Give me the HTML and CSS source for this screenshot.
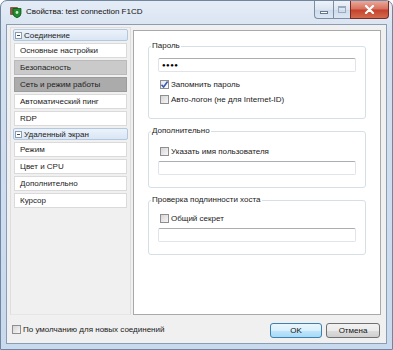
FILE: index.html
```html
<!DOCTYPE html>
<html lang="ru">
<head>
<meta charset="utf-8">
<title>Свойства</title>
<link rel="stylesheet" href="styles.css">
</head>
<body>
<div class="window">
  <div class="titlebar">
    <svg class="appicon" width="12" height="12" viewBox="0 0 12 12">
      <rect x="0" y="1" width="8" height="8" rx="1" fill="#8a5a4a"/>
      <path d="M3 2.5 L11 2.5 L11 7.5 Q11 10.5 7 11.8 Q3 10.5 3 7.5 Z" fill="#1f8a2e" stroke="#0d5a18" stroke-width="0.8"/>
      <circle cx="7" cy="6.5" r="1.4" fill="#cfe9cf"/>
    </svg>
    <span class="title">Свойства: test connection F1CD</span>
    <div class="caption">
      <span class="cbtn min"><i></i></span>
      <span class="cbtn max"><i></i></span>
      <span class="cbtn close">
        <svg width="11" height="9" viewBox="0 0 11 9"><path d="M2 1 L9 8 M9 1 L2 8" stroke="#fff" stroke-width="2.2" stroke-linecap="round"/></svg>
      </span>
    </div>
  </div>
  <div class="client">
    <div class="main">
      <nav class="sidebar">
        <div class="head"><span class="toggle"></span>Соединение</div>
        <div class="item">Основные настройки</div>
        <div class="item sel">Безопасность</div>
        <div class="item sel2">Сеть и режим работы</div>
        <div class="item">Автоматический пинг</div>
        <div class="item">RDP</div>
        <div class="head"><span class="toggle"></span>Удаленный экран</div>
        <div class="item">Режим</div>
        <div class="item">Цвет и CPU</div>
        <div class="item">Дополнительно</div>
        <div class="item">Курсор</div>
      </nav>
      <section class="panel">
        <fieldset class="group g1">
          <legend>Пароль</legend>
          <div class="input pass">&#9679;&#9679;&#9679;&#9679;</div>
          <div class="check first"><span class="box checked"><svg width="9" height="9" viewBox="0 0 9 9"><path d="M1.5 4.8 L3.6 7 L7.6 1.5" fill="none" stroke="#3b5bab" stroke-width="1.6"/></svg></span>Запомнить пароль</div>
          <div class="check"><span class="box"></span>Авто-логон (не для Internet-ID)</div>
        </fieldset>
        <fieldset class="group">
          <legend>Дополнительно</legend>
          <div class="check"><span class="box"></span>Указать имя пользователя</div>
          <div class="input"></div>
        </fieldset>
        <fieldset class="group g3">
          <legend>Проверка подлинности хоста</legend>
          <div class="check"><span class="box"></span>Общий секрет</div>
          <div class="input"></div>
        </fieldset>
      </section>
    </div>
    <div class="footer">
      <div class="check"><span class="box"></span>По умолчанию для новых соединений</div>
      <div class="buttons">
        <span class="btn default">OK</span>
        <span class="btn">Отмена</span>
      </div>
    </div>
  </div>
</div>
</body>
</html>
```
FILE: styles.css
```css
* { box-sizing: border-box; }
html, body { margin: 0; padding: 0; }
body {
  width: 393px;
  height: 350px;
  background: #fff;
  font-family: "Liberation Sans", Arial, sans-serif;
  font-size: 8px;
  color: #1a1a1a;
  overflow: hidden;
}
.window {
  width: 393px;
  height: 350px;
  border: 1px solid #71869e;
  border-radius: 7px 7px 0 0;
  background: linear-gradient(180deg, #e4ecf6 0%, #d3e0f0 12%, #c9daee 100%);
  padding: 0 5px 5px 5px;
  display: flex;
  flex-direction: column;
}
.titlebar {
  height: 23px;
  display: flex;
  align-items: center;
  padding-left: 4px;
}
.appicon { flex: none; margin-top: -2px; }
.title {
  margin-left: 4px;
  font-size: 8px;
  color: #111;
  margin-top: -2px;
}
.caption {
  margin-left: auto;
  align-self: flex-start;
  display: flex;
  margin-right: -2px;
  height: 18px;
}
.cbtn {
  height: 18px;
  border: 1px solid #7d8ea3;
  border-top: none;
  display: flex;
  align-items: center;
  justify-content: center;
  background: linear-gradient(180deg, #eef3f9 0%, #dbe5f1 50%, #cbdaeb 51%, #dce7f4 100%);
}
.cbtn.min { width: 19px; border-radius: 0 0 0 4px; border-right: none; }
.cbtn.max { width: 17px; border-right: none; }
.cbtn.close {
  width: 39px;
  border-radius: 0 0 4px 0;
  border-color: #7a2a22;
  background: linear-gradient(180deg, #e9a99b 0%, #d7705c 48%, #c4412b 52%, #d36a50 100%);
}
.cbtn.min i {
  width: 8px; height: 3px;
  margin-top: 5px;
  border: 1px solid #66778c;
  background: #fff;
  display: block;
}
.cbtn.max i {
  width: 8px; height: 7px;
  border: 1px solid #9aa9bb;
  border-top-width: 2px;
  display: block;
}
.client {
  flex: 1;
  border: 1px solid #8a9db4;
  background: #f0f0f0;
  padding: 2px 5px 0 3px;
  display: flex;
  flex-direction: column;
}
.main {
  height: 288px;
  display: flex;
  gap: 2px;
}
.sidebar {
  width: 121px;
  border: 1px solid #dedede;
  border-bottom-color: #e6e6e6;
  padding: 1px 2px;
  display: flex;
  flex-direction: column;
  gap: 2px;
}
.head {
  height: 12px;
  display: flex;
  align-items: center;
  border: 1px solid #b3c7df;
  border-radius: 2px;
  background: linear-gradient(180deg, #ecf2fa, #d9e6f5);
  padding-left: 1px;
  color: #1a1a1a;
}
.toggle {
  width: 7px;
  height: 7px;
  border: 1px solid #8c9cb1;
  background: #fff;
  margin-right: 2px;
  position: relative;
  flex: none;
}
.toggle::after {
  content: "";
  position: absolute;
  left: 1px; right: 1px; top: 2px;
  height: 1px;
  background: #3d4a5c;
}
.item {
  height: 15px;
  margin: 0 1px;
  border: 1px solid #dadada;
  background: #fff;
  padding-left: 5px;
  display: flex;
  align-items: center;
  color: #222;
}
.item.sel { background: #cacaca; border-color: #bababa; }
.item.sel2 { background: #ababab; border-color: #9c9c9c; }
.panel {
  flex: 1;
  margin-top: 3px;
  background: #fff;
  border: 1px solid #a9a9a9;
  padding: 9px 14px 0 14px;
  display: flex;
  flex-direction: column;
  gap: 6px;
}
.group {
  margin: 0;
  border: 1px solid #d5dfe5;
  border-radius: 3px;
  padding: 8px 9px 12px 9px;
  min-width: 0;
}
.group.g1 { padding-top: 6px; }
.group.g3 { padding-top: 6px; }
.group legend {
  margin-left: -7px;
  padding: 0 1px;
  line-height: 12px;
  color: #1a1a1a;
}
.input {
  height: 14px;
  border: 1px solid #e2e3ea;
  border-top-color: #abadb3;
  border-radius: 2px;
  background: #fff;
  margin-top: 3px;
}
.input.pass {
  margin-top: 0;
  font-size: 6px;
  letter-spacing: 0.5px;
  display: flex;
  align-items: center;
  padding-left: 3px;
  color: #000;
}
.check {
  height: 13px;
  display: flex;
  align-items: center;
  padding-left: 2px;
  color: #1a1a1a;
}
.check.first { margin-top: 6px; margin-bottom: 2px; }
.box {
  width: 9px;
  height: 9px;
  border: 1px solid #8f8f8f;
  background: linear-gradient(135deg, #d5d5d5, #f7f7f7);
  margin-right: 2px;
  flex: none;
  display: flex;
  align-items: center;
  justify-content: center;
}
.box.checked { background: linear-gradient(135deg, #e6ebf3, #fbfcfe); }
.box svg { flex: none; }
.footer {
  flex: 1;
  display: flex;
  align-items: center;
  padding: 0 1px 0 2px;
}
.footer .check { padding-left: 0; }
.buttons { margin-left: auto; display: flex; gap: 4px; margin-top: 2px; }
.btn {
  width: 54px;
  height: 15px;
  border: 1px solid #707070;
  border-radius: 3px;
  background: linear-gradient(180deg, #f2f2f2 0%, #ebebeb 50%, #dddddd 51%, #cfcfcf 100%);
  display: flex;
  align-items: center;
  justify-content: center;
  color: #111;
}
.btn.default {
  width: 52px;
  border-color: #3c7fb1;
  background: linear-gradient(180deg, #eaf6fd 0%, #d9f0fc 50%, #bee6fd 51%, #a7d9f5 100%);
}
```
